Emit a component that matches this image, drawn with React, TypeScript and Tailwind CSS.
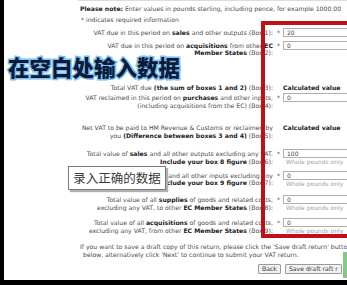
import React from "react";

const Inp = ({ v }: { v: string }) => (
  <div className="mt-[-1px] h-[9px] w-[80px] border border-[#b0b0b0] bg-white pl-[3px] text-[6px] leading-[7px] text-[#444]">
    {v}
  </div>
);

const Hint = () => <div className="pl-[3px] text-[6px] leading-[7.5px] text-[#a0a0a0]">Whole pounds only</div>;

const Row = ({
  cls,
  label,
  star,
  children,
}: {
  cls: string;
  label: React.ReactNode;
  star?: boolean;
  children?: React.ReactNode;
}) => (
  <div className={"flex " + cls}>
    <div className="w-[269px] shrink-0 whitespace-nowrap text-right">{label}</div>
    <div className="w-[10px] shrink-0 pl-[4px]">{star ? "*" : ""}</div>
    <div className="flex-1">{children}</div>
  </div>
);

const B = ({ children }: { children: React.ReactNode }) => <b className="font-bold text-[#222]">{children}</b>;

export default function App() {
  return (
    <div className="relative flex h-[285px] w-[347px] flex-col overflow-hidden bg-white">
      <div className="flex flex-1">
        <div className="w-[4px] shrink-0 bg-black" />
        <div className="relative flex-1 text-[6.15px] leading-[7.5px] text-[#4a4a4a] [font-family:'DejaVu_Sans',Verdana,sans-serif]">
          <div className="ml-[74px] h-[5px] border-t border-[#dcdcdc]" />
          <div className="h-[11px] whitespace-nowrap pl-[76px]">
            <B>Please note:</B> Enter values in pounds sterling, including pence, for example 1000.00
          </div>
          <div className="h-[13px] pl-[77px]">* indicates required information</div>
          <Row cls="h-[12.5px]" star label={<>VAT due in this period on <B>sales</B> and other outputs (Box 1):</>}>
            <Inp v="20" />
          </Row>
          <Row
            cls="h-[42.5px]"
            star
            label={
              <>
                VAT due in this period on <B>acquisitions</B> from other <B>EC</B>
                <br />
                <B>Member States</B> (Box 2):
              </>
            }
          >
            <Inp v="0" />
          </Row>
          <Row cls="h-[10px]" label={<>Total VAT due <B>(the sum of boxes 1 and 2)</B> (Box 3):</>}>
            <B>Calculated value</B>
          </Row>
          <Row
            cls="h-[30px]"
            star
            label={
              <>
                VAT reclaimed in this period on <B>purchases</B> and other inputs,
                <br />
                (including acquisitions from the EC) (Box 4):
              </>
            }
          >
            <Inp v="0" />
          </Row>
          <Row
            cls="h-[26px]"
            label={
              <>
                Net VAT to be paid to HM Revenue &amp; Customs or reclaimed by
                <br />
                you <B>(Difference between boxes 3 and 4)</B> (Box 5):
              </>
            }
          >
            <B>Calculated value</B>
          </Row>
          <Row
            cls="h-[21.5px]"
            star
            label={
              <>
                Total value of <B>sales</B> and all other outputs excluding any VAT.
                <br />
                <B>Include your box 8 figure</B> (Box 6):
              </>
            }
          >
            <Inp v="100" />
            <Hint />
          </Row>
          <Row
            cls="h-[24.5px]"
            star
            label={
              <>
                Total value of <B>purchases</B> and all other inputs excluding any
                <br />
                <B>Include your box 9 figure</B> (Box 7):
              </>
            }
          >
            <Inp v="0" />
            <Hint />
          </Row>
          <Row
            cls="h-[23px]"
            star
            label={
              <>
                Total value of all <B>supplies</B> of goods and related costs,
                <br />
                excluding any VAT, to other <B>EC Member States</B> (Box 8):
              </>
            }
          >
            <Inp v="0" />
            <Hint />
          </Row>
          <Row
            cls="h-[24px]"
            star
            label={
              <>
                Total value of all <B>acquisitions</B> of goods and related costs,
                <br />
                excluding any VAT, from other <B>EC Member States</B> (Box 9):
              </>
            }
          >
            <Inp v="0" />
            <Hint />
          </Row>
          <div className="h-[21px] whitespace-nowrap pl-[76px]">
            If you want to save a draft copy of this return, please click the 'Save draft return' button
            <br />
            <span className="pl-[3px]">below, alternatively click 'Next' to continue to submit your VAT return.</span>
          </div>
          <div className="flex h-[16px] items-start gap-[4px] pl-[254px]">
            <div className="flex h-[10px] items-center rounded-[1px] border border-[#9a9a9a] bg-[#f1f1f1] px-[3px] text-[#333]">
              Back
            </div>
            <div className="flex h-[10px] items-center whitespace-nowrap rounded-[1px] border border-[#9a9a9a] bg-[#f1f1f1] px-[3px] text-[#333]">
              Save draft raft r
            </div>
          </div>

          <div className="absolute left-[257px] top-[21px] h-[217px] w-[100px] border-[4px] border-[#bf1018]" />
          <div className="absolute left-[339px] top-[252px] h-[26px] w-[6px] bg-[#86c986]" />

          <div className="absolute left-[64px] top-[166px] flex h-[24px] w-[98px] items-center justify-center border border-[#7a7a7a] bg-white text-[12.5px] leading-none text-[#3a3a3a] shadow-[2px_2px_1px_#b0b0b0] [font-family:'Noto_Sans_CJK_SC',sans-serif]">
            录入正确的数据
          </div>
        </div>
      </div>
      <div className="h-[5px] shrink-0 bg-black" />

      <div className="absolute left-[8px] top-[53px] whitespace-nowrap text-[21.5px] font-black leading-[28px] text-[#0d1a3c] [font-family:'Noto_Sans_CJK_SC',sans-serif] [-webkit-text-stroke:3px_#7cc4ee] [paint-order:stroke_fill]">
        在空白处输入数据
      </div>
    </div>
  );
}
